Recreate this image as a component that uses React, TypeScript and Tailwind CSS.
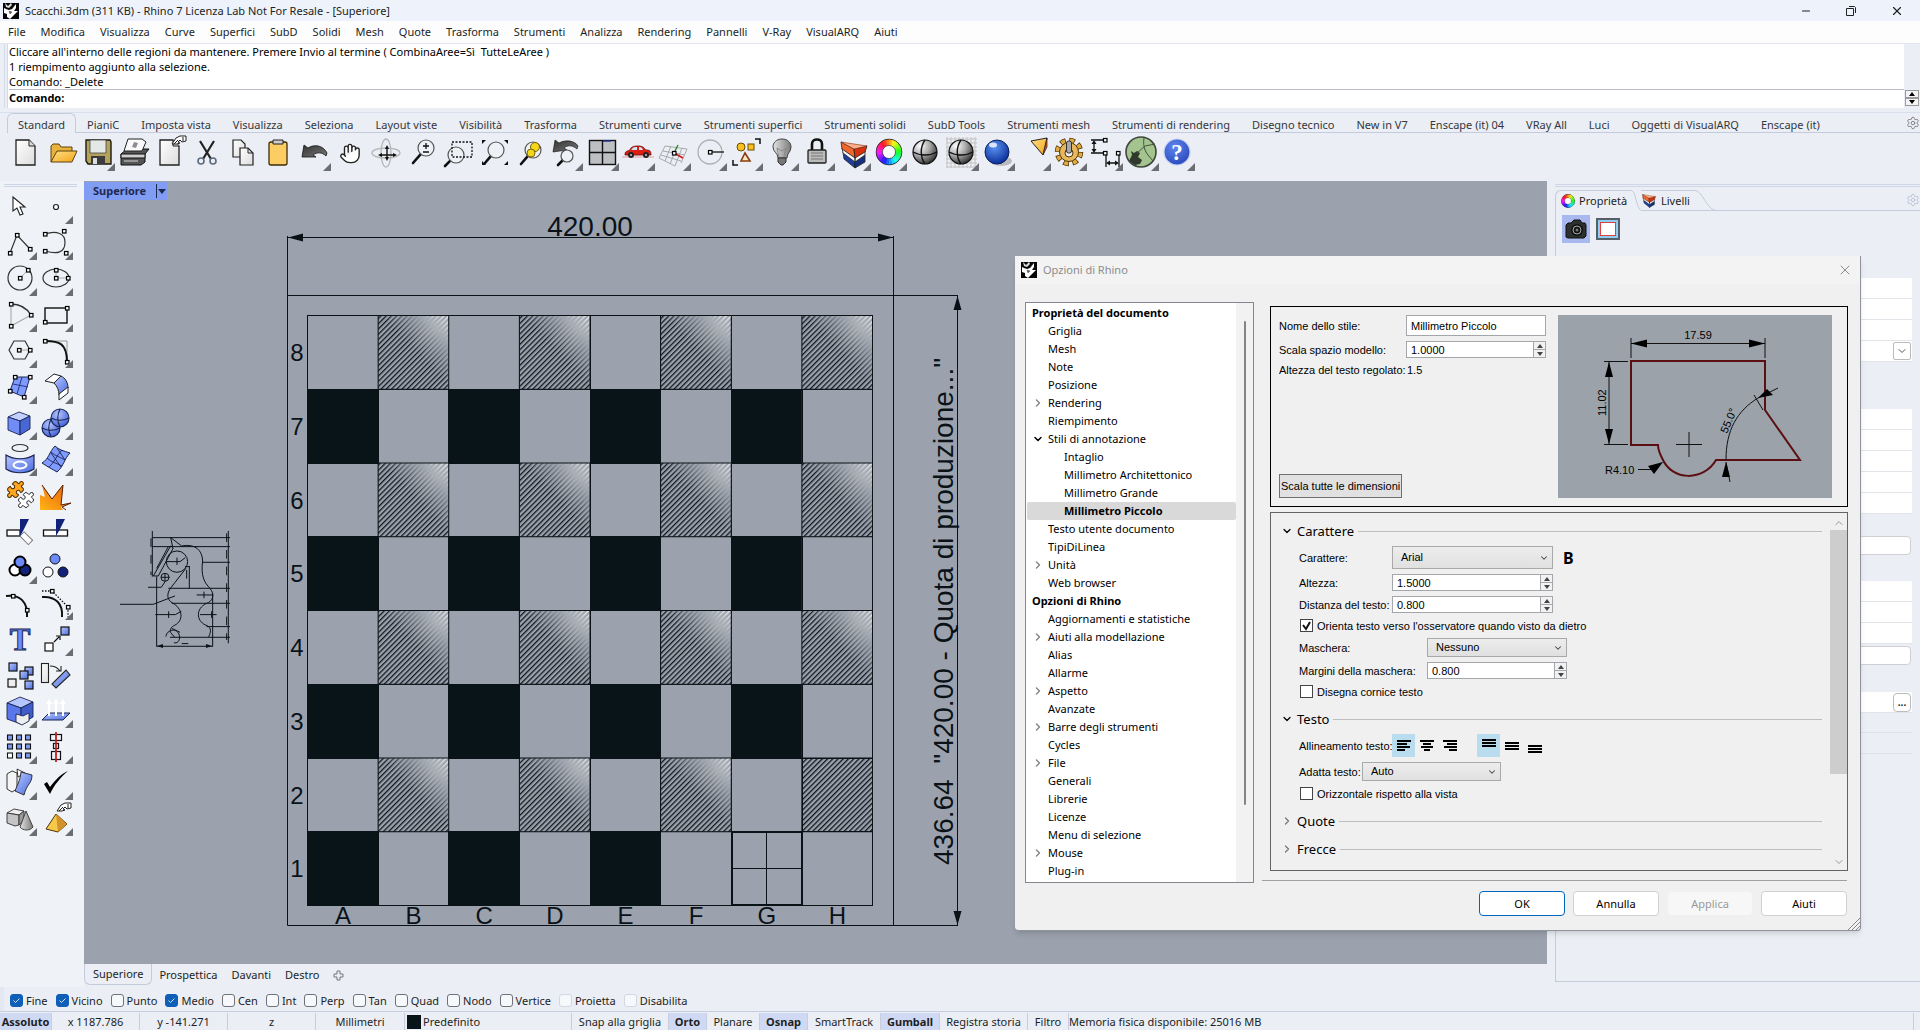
import { useState } from 'react';
import type { ReactNode } from 'react';
import { Minus, X, ChevronDown, ChevronRight, ChevronUp, Puzzle, Settings, Hand } from 'lucide-react';

const menuItems = [
  'File', 'Modifica', 'Visualizza', 'Curve', 'Superfici', 'SubD', 'Solidi', 'Mesh', 'Quote', 'Trasforma',
  'Strumenti', 'Analizza', 'Rendering', 'Pannelli', 'V-Ray', 'VisualARQ', 'Aiuti',
];

const toolbarTabs = [
  'Standard', 'PianiC', 'Imposta vista', 'Visualizza', 'Seleziona', 'Layout viste', 'Visibilità', 'Trasforma',
  'Strumenti curve', 'Strumenti superfici', 'Strumenti solidi', 'SubD Tools', 'Strumenti mesh',
  'Strumenti di rendering', 'Disegno tecnico', 'New in V7', 'Enscape (it) 04', 'VRay All', 'Luci',
  'Oggetti di VisualARQ', 'Enscape (it)',
];

interface Tool {
  name: string;
  flyout?: boolean;
  art: ReactNode;
}

interface TreeItem {
  label: string;
  level: number;
  state?: 'open' | 'closed';
}

const treeItems: TreeItem[] = [
  { label: 'Proprietà del documento', level: 0 },
  { label: 'Griglia', level: 1 },
  { label: 'Mesh', level: 1 },
  { label: 'Note', level: 1 },
  { label: 'Posizione', level: 1 },
  { label: 'Rendering', level: 1, state: 'closed' },
  { label: 'Riempimento', level: 1 },
  { label: 'Stili di annotazione', level: 1, state: 'open' },
  { label: 'Intaglio', level: 2 },
  { label: 'Millimetro Architettonico', level: 2 },
  { label: 'Millimetro Grande', level: 2 },
  { label: 'Millimetro Piccolo', level: 2 },
  { label: 'Testo utente documento', level: 1 },
  { label: 'TipiDiLinea', level: 1 },
  { label: 'Unità', level: 1, state: 'closed' },
  { label: 'Web browser', level: 1 },
  { label: 'Opzioni di Rhino', level: 0 },
  { label: 'Aggiornamenti e statistiche', level: 1 },
  { label: 'Aiuti alla modellazione', level: 1, state: 'closed' },
  { label: 'Alias', level: 1 },
  { label: 'Allarme', level: 1 },
  { label: 'Aspetto', level: 1, state: 'closed' },
  { label: 'Avanzate', level: 1 },
  { label: 'Barre degli strumenti', level: 1, state: 'closed' },
  { label: 'Cycles', level: 1 },
  { label: 'File', level: 1, state: 'closed' },
  { label: 'Generali', level: 1 },
  { label: 'Librerie', level: 1 },
  { label: 'Licenze', level: 1 },
  { label: 'Menu di selezione', level: 1 },
  { label: 'Mouse', level: 1, state: 'closed' },
  { label: 'Plug-in', level: 1 },
];

const osnaps = [
  { label: 'Fine', on: true },
  { label: 'Vicino', on: true },
  { label: 'Punto' },
  { label: 'Medio', on: true },
  { label: 'Cen' },
  { label: 'Int' },
  { label: 'Perp' },
  { label: 'Tan' },
  { label: 'Quad' },
  { label: 'Nodo' },
  { label: 'Vertice' },
  { label: 'Proietta', dim: true },
  { label: 'Disabilita', dim: true },
];

/* ---------- small drawing helpers ---------- */

// Small square grip used on curve icons
const Grip = ({ x, y }: { x: number; y: number }) => (
  <rect x={x - 1.5} y={y - 1.5} width="3.5" height="3.5" fill="#fff" stroke="#000" strokeWidth="1.2" />
);

const ColorWheel = ({ cx, cy, r, w }: { cx: number; cy: number; r: number; w: number }) => {
  const len = (2 * Math.PI * r) / 24;
  return (
    <g fill="none">
      <circle cx={cx} cy={cy} r={r} stroke="#222" strokeWidth={w + 1.5} />
      {Array.from({ length: 24 }, (_, i) => (
        <circle
          key={i}
          cx={cx}
          cy={cy}
          r={r}
          stroke={`hsl(${(i * 15 + 40) % 360} 100% 55%)`}
          strokeWidth={w}
          strokeDasharray={`${len + 0.4} 999`}
          transform={`rotate(${i * 15 - 90} ${cx} ${cy})`}
        />
      ))}
      <circle cx={cx} cy={cy} r={r - w / 2} fill="#fff" stroke="#333" strokeWidth="0.6" />
    </g>
  );
};

const Lens = ({ x, y, hx, hy }: { x: number; y: number; hx: number; hy: number }) => {
  const d = Math.hypot(hx - x, hy - y);
  return (
    <>
      <line x1={x + ((hx - x) / d) * 8} y1={y + ((hy - y) / d) * 8} x2={hx} y2={hy} stroke="#111" strokeWidth="2.6" strokeLinecap="round" />
      <circle cx={x} cy={y} r="8" fill="#eef1f5" fillOpacity="0.9" stroke="#555" strokeWidth="1.2" />
    </>
  );
};

const Layers = () => (
  <>
    <path d="M8 17l12 8v8L9 24z" fill="#1d3f9c" stroke="#222" strokeWidth="0.8" />
    <path d="M20 25l10-5v7l-10 6z" fill="#16307c" stroke="#222" strokeWidth="0.8" />
    <path d="M7 13l13 9v5L8 18zM20 22l10-6v4l-10 7z" fill="#f7f7f7" stroke="#222" strokeWidth="0.8" />
    <path d="M6 7l1 7 13 9-1-9z" fill="#f2652c" stroke="#222" strokeWidth="0.8" />
    <path d="M19 14l13-3-2 6-10 6z" fill="#d6300c" stroke="#222" strokeWidth="0.8" />
    <path d="M6 7l26 4-13 3z" fill="#ffb08a" stroke="#7a2a10" strokeWidth="0.6" />
  </>
);

const RhinoLogo = () => (
  <svg className="h-4 w-4 shrink-0" viewBox="0 0 16 16">
    <rect width="16" height="16" fill="#050505" />
    <path d="M1 5l2 1 3 1 3-1 4-5 0 4-2 3 4 0-4 4-4 4-3-2 0-3-3-1z" fill="#fff" />
    <path d="M2 0l3 3 3-3 1 2-3 3-3-1z" fill="#ddd" />
    <path d="M6 8l3 1-2 2zM11 3l-2 3" fill="#555" stroke="#555" strokeWidth="0.5" />
  </svg>
);

const GhostHand = ({ x, y }: { x: number; y: number }) => (
  <path
    transform={`translate(${x} ${y})`}
    d="M0 8l4-6 4-2h6v5l-4 1-2-2-2 2 2 1-3 1zM11 1v4M2 8l4-4"
    fill="#fff"
    stroke="#222"
    strokeWidth="1"
  />
);

/* ---------- main toolbar ---------- */

const mainTools: Tool[] = [
  { name: 'Nuovo', art: <><path d="M9 5h13l6 6v19H9z" fill="url(#paper)" stroke="#222" strokeWidth="1.3" /><path d="M22 5v6h6" fill="#ddd" stroke="#222" /></> },
  { name: 'Apri', art: <><path d="M8 27V11l2-2h6l2 3h11v4" fill="#e9b23c" stroke="#5c430c" /><path d="M8 27l6-11h20l-5 11z" fill="url(#gold)" stroke="#5c430c" /></> },
  { name: 'Salva', flyout: true, art: <><path d="M7 5h24l1 2v22H9l-2-3z" fill="#b3a35c" stroke="#1c1a10" strokeWidth="1.4" /><path d="M11 5h16v13H11z" fill="#e4e8e6" stroke="#444" strokeWidth="0.8" /><path d="M12 21h14v8H12z" fill="#3c3c3c" /><path d="M14 23h4v6h-4z" fill="#ddd" /></> },
  { name: 'Stampa', art: <><path d="M6 19l6-5h22l-4 5v8l-4 3H6z" fill="#555" stroke="#111" /><path d="M6 19h24v4H6z" fill="#cfcfcf" stroke="#111" /><path d="M13 4h14l4 3-4 9H9z" fill="#fafafa" stroke="#222" /><path d="M19 7l4 1-2 5-4-1z" fill="#8a8f96" /><path d="M9 26h14" stroke="#aaa" strokeWidth="1.5" /></> },
  { name: 'Proprietà documento', art: <><path d="M9 5h13l6 6v19H9z" fill="url(#paper)" stroke="#222" strokeWidth="1.3" /><path d="M22 5v6h6" fill="#ddd" stroke="#222" /><GhostHand x={21} y={1} /></> },
  { name: 'Taglia', art: <g fill="none"><path d="M13 6l11 18M27 6L16 24" stroke="#222" strokeWidth="2.2" /><circle cx="14" cy="26" r="3" stroke="#5c6a80" strokeWidth="1.6" /><circle cx="26" cy="26" r="3" stroke="#5c6a80" strokeWidth="1.6" /></g> },
  { name: 'Copia', art: <><path d="M10 5h8l4 4v13H10z" fill="url(#paper)" stroke="#222" strokeWidth="1.2" /><path d="M17 13h8l5 5v12H17z" fill="url(#paper)" stroke="#222" strokeWidth="1.2" /><path d="M25 13v5h5" fill="none" stroke="#222" /></> },
  { name: 'Incolla', art: <><rect x="10" y="7" width="18" height="23" rx="2" fill="#fbcd62" stroke="#3d2c08" strokeWidth="1.3" /><path d="M14 5h10v4H14z" fill="#ccc" stroke="#222" /></> },
  { name: 'Annulla', flyout: true, art: <path d="M7 22l2-12 4 3c6-4 15-3 19 5l-1 3c-4-4-9-4-13-1l3 2z" fill="url(#dark)" stroke="#111" strokeWidth="0.8" /> },
  { name: 'Pan', art: <Hand x={8} y={6} width={22} height={25} stroke="#222" strokeWidth={1.5} fill="#fff" /> },
  { name: 'Ruota vista', art: <g fill="none"><ellipse cx="19" cy="18" rx="14" ry="5" stroke="#b5b5b5" strokeWidth="1.3" /><ellipse cx="19" cy="18" rx="5" ry="14" stroke="#b5b5b5" strokeWidth="1.3" /><path d="M20 14v9M14 20h13" stroke="#111" strokeWidth="1.4" /><path d="M18 14l2-4 2 4zM18 22l2 4 2-4zM15 18l-4 2 4 2zM26 18l4 2-4 2z" fill="#111" /></g> },
  { name: 'Zoom dinamico', art: <><Lens x={23} y={13} hx={10} hy={28} /><path d="M20 11h6M23 8v6M20 17h6" stroke="#111" strokeWidth="1.3" /></> },
  { name: 'Zoom finestra', art: <><Lens x={17} y={20} hx={6} hy={31} /><path d="M13 7h20v15H13z" fill="none" stroke="#111" strokeWidth="1.3" strokeDasharray="2 1.5" /></> },
  { name: 'Zoom estensioni', art: <><Lens x={21} y={15} hx={10} hy={28} /><path d="M7 5h4l-4 4zM33 5h-4l4 4zM7 30h4l-4-4zM33 30h-4l4-4z" fill="#111" /></> },
  { name: 'Zoom selezionati', art: <><Lens x={22} y={15} hx={10} hy={29} /><circle cx="24" cy="12" r="4.5" fill="#f5d51c" stroke="#776300" /><circle cx="20" cy="18" r="4" fill="#f5d51c" stroke="#776300" /></> },
  { name: 'Vista precedente', flyout: true, art: <><path d="M6 17l2-12 4 3c7-4 16-2 19 3l-1 3c-5-4-9-4-13-1l3 2z" fill="url(#dark)" stroke="#111" strokeWidth="0.6" /><line x1="16" y1="25" x2="11" y2="30" stroke="#111" strokeWidth="2.6" strokeLinecap="round" /><circle cx="20" cy="21" r="6" fill="#eef1f5" stroke="#555" strokeWidth="1.2" /></> },
  { name: 'Quattro viste', flyout: true, art: <><rect x="6.5" y="5.5" width="26" height="24" fill="#bdbfc3" stroke="#111" strokeWidth="1.4" /><path d="M19.5 5v25M6 17.5h27" stroke="#111" strokeWidth="1.4" /><path d="M20 6h8" stroke="#22339a" strokeWidth="1.4" /></> },
  { name: 'Vista destra', flyout: true, art: <><path d="M3 22h32" stroke="#e2a0a0" /><path d="M6 19c0-3 3-3 5-4 1-3 3-4 8-4 5 0 6 2 8 4 4 0 5 1 5 5H6z" fill="#dc1f14" stroke="#6d0b05" strokeWidth="0.8" /><path d="M13 14c1-2 3-2 5-2v3h-6zM20 12c3 0 3 1 4 3h-4z" fill="#cfe3f2" /><circle cx="12" cy="20" r="3" fill="#222" /><circle cx="27" cy="20" r="3" fill="#222" /><circle cx="12" cy="20" r="1" fill="#ccc" /><circle cx="27" cy="20" r="1" fill="#ccc" /></> },
  { name: 'Piano C', flyout: true, art: <g fill="none"><path d="M10 11l22 3M8 16l22 4M6 20l20 6M4 23l16 8M10 11L4 23M16 11l-6 15M22 12l-7 17M27 13l-7 18M32 14l-6 14" stroke="#a9a9a9" /><path d="M19 18l9 5" stroke="#d01818" strokeWidth="1.6" /><path d="M19 18l4-8" stroke="#2c8a2c" strokeWidth="1.4" /><Grip x={19} y={18} /></g> },
  { name: 'Orto', flyout: true, art: <><circle cx="19" cy="17" r="12" fill="none" stroke="#b0b0b0" strokeWidth="1.3" /><path d="M19 17h14" stroke="#111" strokeWidth="1.3" /><Grip x={19} y={17} /></> },
  { name: 'Seleziona', flyout: true, art: <g fill="#fbc11c" stroke="#6b4c05"><circle cx="14" cy="12" r="4" /><rect x="21" y="9" width="6" height="6" /><path d="M18 18l5 8h-9z" fill="#f5e6c8" stroke="#8a3c0c" strokeWidth="1.6" /><path d="M28 4h5v5M6 25v5h5" fill="none" stroke="#111" strokeWidth="1.5" /></g> },
  { name: 'Nascondi', flyout: true, art: <><path d="M19 4c6 0 9 4 9 8 0 5-4 6-4 11h-9c0-5-5-6-5-11 0-4 3-8 9-8z" fill="url(#steel)" stroke="#444" /><path d="M15 23h8v4l-3 3h-2l-3-3z" fill="#777" stroke="#333" /><path d="M16 22l-2-9 5 3 4-3-2 9" fill="none" stroke="#888" /></> },
  { name: 'Blocca', flyout: true, art: <><path d="M13 15V9c0-6 10-6 10 0v6" fill="none" stroke="#111" strokeWidth="2.6" /><rect x="9" y="15" width="18" height="13" rx="1" fill="#bbb" stroke="#222" strokeWidth="1.3" /><path d="M12 18h12M12 21h12M12 24h12" stroke="#777" /></> },
  { name: 'Livelli', flyout: true, art: <Layers /> },
  { name: 'Proprietà', flyout: true, art: <ColorWheel cx={18} cy={17} r={9.5} w={6} /> },
  { name: 'Ombreggiata', art: <><circle cx="18" cy="17" r="12" fill="url(#ball)" stroke="#111" strokeWidth="1.2" /><path d="M18 5c-5 7-5 17 0 24M6 17c7 4 17 4 24 0" fill="none" stroke="#111" strokeWidth="1.4" /></> },
  { name: 'Modalità', flyout: true, art: <><path d="M4 2v31M8 2v31M12 2v31M16 2v31M20 2v31M24 2v31M28 2v31M32 2v31M3 4h31M3 8h31M3 12h31M3 16h31M3 20h31M3 24h31M3 28h31M3 32h31" stroke="#c2c2c2" /><circle cx="18" cy="17" r="12" fill="url(#ball)" stroke="#111" strokeWidth="1.2" /><path d="M18 5c-5 7-5 17 0 24M6 17c7 4 17 4 24 0" fill="none" stroke="#111" strokeWidth="1.4" /></> },
  { name: 'Render', flyout: true, art: <><ellipse cx="22" cy="26" rx="11" ry="5" fill="#999" opacity="0.6" /><circle cx="18" cy="17" r="12" fill="url(#blueball)" stroke="#08205e" /><ellipse cx="14" cy="10" rx="4" ry="2.5" fill="#fff" opacity="0.8" /></> },
  { name: 'Luce', flyout: true, art: <><path d="M16 6l16-3-4 17z" fill="url(#gold)" stroke="#222" /><path d="M32 3l-4 17 4-8z" fill="#d05a12" stroke="#222" strokeWidth="0.7" /></> },
  { name: 'Opzioni', flyout: true, art: <><circle cx="18" cy="17" r="11" fill="none" stroke="#4d3405" strokeWidth="6.5" strokeDasharray="5.2 3.438" /><circle cx="18" cy="17" r="11" fill="none" stroke="#e2aa45" strokeWidth="5" strokeDasharray="3.8 4.838" strokeDashoffset="-0.7" /><circle cx="18" cy="17" r="9.5" fill="#e8b75b" stroke="#4d3405" /><circle cx="18" cy="18" r="4" fill="#eee" stroke="#4d3405" /><rect x="15.5" y="6" width="5" height="12" rx="2" fill="#a8a8a8" stroke="#333" /></> },
  { name: 'Quote', flyout: true, art: <g stroke="#111" strokeWidth="1.3"><path d="M4 5h15M4 18h15M7 8v7M19 18v14M32 18v14M21 28h9" fill="none" /><path d="M4.5 9L7 5l2.5 4zM4.5 14L7 18l2.5-4zM23 25.5L19 28l4 2.5zM28 25.5l4 2.5-4 2.5z" fill="#111" strokeWidth="0" /><Grip x={18} y={5} /><Grip x={18} y={18} /><Grip x={31} y={18} /></g> },
  { name: 'Grasshopper', flyout: true, art: <><circle cx="18" cy="17" r="15" fill="#a3c48e" stroke="#3f463d" strokeWidth="1.6" /><path d="M6 26l3-6-1-4 3 2 3-2 3 2-2 4 4 3-2 4-5 1z" fill="#2f3a2c" /><path d="M14 18l8-7M21 3c-1 6 0 12 4 17l5 6M22 11L32 9" stroke="#44553d" fill="none" /></> },
  { name: 'Aiuti', flyout: true, art: <><circle cx="18" cy="17" r="13" fill="url(#helpball)" stroke="#c7d2f5" strokeWidth="1.2" /><text x="18" y="25" textAnchor="middle" fontSize="23" fontWeight="700" fontFamily="Liberation Serif, serif" fill="#fff">?</text></> },
];

/* ---------- side toolbar (two columns) ---------- */

const sideTools: Tool[] = [
  { name: 'Selezione', art: <path d="M12 9v14l4-3 3 7 3-1-3-7h5z" fill="#fff" stroke="#222" strokeWidth="1.1" /> },
  { name: 'Punto', flyout: true, art: <circle cx="19" cy="19" r="2.5" fill="#fff" stroke="#222" strokeWidth="1.2" /> },
  { name: 'Polilinea', flyout: true, art: <><path d="M9 29l7-18 13 14" fill="none" stroke="#333" strokeWidth="1.2" /><Grip x={9} y={29} /><Grip x={16} y={11} /><Grip x={29} y={25} /></> },
  { name: 'Curva', flyout: true, art: <><path d="M8 10c12-4 20 0 20 8 0 12-9 12-20 9" fill="none" stroke="#333" strokeWidth="1.2" /><Grip x={8} y={10} /><Grip x={27} y={7} /><Grip x={8} y={27} /><Grip x={29} y={29} /></> },
  { name: 'Cerchio', flyout: true, art: <><circle cx="19" cy="18" r="12" fill="none" stroke="#333" strokeWidth="1.2" /><path d="M19 18l8-8" stroke="#aaa" /><Grip x={19} y={18} /><Grip x={27} y={10} /></> },
  { name: 'Ellisse', flyout: true, art: <><ellipse cx="19" cy="18" rx="13" ry="9" fill="none" stroke="#333" strokeWidth="1.2" /><path d="M19 10v8h12" fill="none" stroke="#aaa" /><Grip x={19} y={18} /><Grip x={19} y={10} /><Grip x={31} y={18} /></> },
  { name: 'Arco', flyout: true, art: <><path d="M10 8v22l20-11" fill="none" stroke="#aaa" strokeWidth="1.1" /><path d="M10 8c8 0 15 3 20 11" fill="none" stroke="#333" strokeWidth="1.3" /><Grip x={10} y={8} /><Grip x={30} y={19} /><Grip x={10} y={30} /></> },
  { name: 'Rettangolo', flyout: true, art: <><rect x="8" y="12" width="22" height="15" fill="none" stroke="#111" strokeWidth="1.4" /><Grip x={30} y={12} /><Grip x={8} y={26} /></> },
  { name: 'Poligono', flyout: true, art: <><path d="M8 18l5-9h11l5 9-5 9H13z" fill="none" stroke="#333" strokeWidth="1.2" /><path d="M18 18h11" stroke="#aaa" /><Grip x={18} y={18} /><Grip x={29} y={18} /></> },
  { name: 'Raccorda', flyout: true, art: <><path d="M8 9h22v21" fill="none" stroke="#999" /><path d="M8 9c14 0 22 2 22 21" fill="none" stroke="#111" strokeWidth="2" /><Grip x={8} y={9} /><Grip x={30} y={30} /></> },
  { name: 'Superficie', flyout: true, art: <><path d="M14 9h15l-6 20-14-6z" fill="#7f9bff" stroke="#1d2a5c" /><path d="M21 9l-5 17M12 16l15 3" stroke="#24388a" /><Grip x={14} y={9} /><Grip x={29} y={9} /><Grip x={23} y={29} /><Grip x={9} y={23} /></> },
  { name: 'Sweep', flyout: true, art: <><path d="M8 13l9-7 7 2-7 7z" fill="#fff" stroke="#222" /><path d="M17 15l7-7c4 2 7 6 7 12l-9 7c0-5-2-9-5-12z" fill="url(#blue)" stroke="#222" /><path d="M22 26l9-7v6l-9 7z" fill="#fff" stroke="#222" /></> },
  { name: 'Cubo', flyout: true, art: <g stroke="#1b2450" strokeWidth="0.9"><path d="M7 13l11-5 11 4-10 5z" fill="#c2d0ff" /><path d="M7 13l12 4v14L7 26z" fill="#6f8df5" /><path d="M19 17l10-5v13l-10 6z" fill="#4866d4" /></g> },
  { name: 'Sfere', flyout: true, art: <g stroke="#1b2450" strokeWidth="1.1"><circle cx="14" cy="24" r="9" fill="url(#blueball2)" /><path d="M14 15c-3 6-3 12 0 18M5 24c6 3 12 3 18 0" fill="none" /><circle cx="23" cy="14" r="9" fill="url(#blueball2)" /><path d="M23 5c-3 6-3 12 0 18M14 14c6 3 12 3 18 0" fill="none" /></g> },
  { name: 'Proietta', flyout: true, art: <><ellipse cx="19" cy="8" rx="8" ry="3.5" fill="none" stroke="#333" strokeWidth="1.2" /><path d="M5 15c8 5 20 5 28 0v14c-8 5-20 5-28 0z" fill="url(#blue)" stroke="#1b2450" strokeWidth="1.2" /><ellipse cx="19" cy="25" rx="6.5" ry="3.5" fill="none" stroke="#fff" strokeWidth="2" /></> },
  { name: 'Mesh', flyout: true, art: <><path d="M18 6c4 4 9 5 15 7-6 6-6 13-13 19-5-3-9-5-15-9 7-4 7-11 13-17z" fill="#7f9bff" stroke="#1b2450" /><path d="M25 10c-6 6-7 12-13 17M14 12c4 4 9 5 14 8M10 18c4 4 9 5 15 8M20 8l8 12M14 13l10 14" stroke="#1b2450" fill="none" strokeWidth="0.9" /></> },
  { name: 'Unisci', art: <><Puzzle x={16} y={15} width={18} height={18} fill="#fff" stroke="#222" strokeWidth={1.3} /><Puzzle x={5} y={4} width={19} height={19} fill="#ffa51e" stroke="#4d2c00" strokeWidth={1.3} /></> },
  { name: 'Esplodi', art: <><path d="M3 34V19l5 2-3-12 10 14 11-14-2 20 10-2-10 4 2 3z" fill="url(#fire)" /><path d="M5 9l10 14 11-14-2 20 10-2-9 4 4 3" fill="none" stroke="#5c2000" strokeWidth="1" /></> },
  { name: 'Tronca', art: <><rect x="6" y="18" width="13" height="6" fill="#fff" stroke="#111" strokeWidth="1.3" /><rect x="21" y="19" width="12" height="6" transform="rotate(45 21 22)" fill="#fff" stroke="#777" /><path d="M19 7h9l-6 12-3 5z" fill="#12217a" /></> },
  { name: 'Suddividi', art: <><rect x="6.5" y="18" width="24" height="6" fill="#fff" stroke="#111" strokeWidth="1.3" /><path d="M19 7h9l-6 12-3 5z" fill="#12217a" /></> },
  { name: 'Raggruppa', flyout: true, art: <g stroke="#000" strokeWidth="2"><circle cx="14" cy="22" r="5.5" fill="#fff" /><circle cx="24" cy="22" r="5.5" fill="#12217a" /><circle cx="19" cy="14" r="5.5" fill="#6b8af8" /></g> },
  { name: 'Separa', art: <g stroke="#111"><circle cx="18" cy="11" r="5" fill="#6b8af8" /><circle cx="11" cy="24" r="5" fill="#fff" /><circle cx="26" cy="24" r="5" fill="#12217a" /></g> },
  { name: 'Modifica punti', art: <><path d="M5 12c14-2 22 6 21 21" fill="none" stroke="#111" strokeWidth="2" /><Grip x={12} y={12} /><Grip x={26} y={26} /></> },
  { name: 'Punti di controllo', flyout: true, art: <><path d="M5 7h10l16 16v10" fill="none" stroke="#111" strokeWidth="1.3" strokeDasharray="1.5 1.5" /><path d="M5 13c14-1 21 7 20 20" fill="none" stroke="#111" strokeWidth="2" /><Grip x={15} y={7} /><Grip x={31} y={23} /></> },
  { name: 'Testo', art: <text x="19" y="30" textAnchor="middle" fontSize="31" fontWeight="700" fontFamily="Liberation Serif, serif" fill="#6f8df5" stroke="#1b2450" strokeWidth="1">T</text> },
  { name: 'Sposta', flyout: true, art: <><rect x="8" y="23" width="8" height="8" fill="#fff" stroke="#111" strokeWidth="1.2" /><rect x="24" y="7" width="8" height="8" fill="url(#blue)" stroke="#111" strokeWidth="1.2" /><path d="M17 22l5-5M19 16h4v4" fill="none" stroke="#111" strokeWidth="1.2" /></> },
  { name: 'Copia', art: <g stroke="#111" strokeWidth="1.2" fill="url(#blue)"><rect x="8" y="7" width="8" height="8" /><rect x="24" y="11" width="8" height="8" /><rect x="19" y="15" width="8" height="8" /><rect x="7" y="23" width="8" height="8" fill="#eee" /><rect x="24" y="25" width="8" height="8" /></g> },
  { name: 'Ruota', art: <g stroke="#222" strokeWidth="1.1"><rect x="4.5" y="7.5" width="7" height="19" fill="url(#paper)" /><path d="M29 14l4 5-14 13-4-4z" fill="url(#blue)" /><path d="M13 10c5 0 8 2 10 5M24 10v5h-5" fill="none" /></g> },
  { name: 'Solidi', flyout: true, art: <g stroke="#1b2450" strokeWidth="0.9"><path d="M6 11l13-6 13 5-12 6z" fill="#b5c6ff" /><path d="M6 11l14 5v16L6 27z" fill="#5877ea" /><path d="M20 16l12-6v15l-12 7z" fill="#3f5ccb" /><path d="M15 22l7 2 6-3v8l-7 4-6-3z" fill="#eee" /></g> },
  { name: 'Estrudi', flyout: true, art: <><path d="M12 21h21l-7 7H5z" fill="url(#blue)" stroke="#1b2450" /><path d="M12 24V10M19 24V10M26 24V10" stroke="#fff" strokeWidth="2" /><path d="M9 12l3-5 3 5zM16 12l3-5 3 5zM23 12l3-5 3 5z" fill="#fff" /></> },
  { name: 'Serie', flyout: true, art: <g stroke="#111" strokeWidth="1.1">{[7, 16, 25].map((y) => [6.5, 15.5, 24.5].map((x) => <rect key={`${x}${y}`} x={x} y={y} width="5" height="5" fill={x < 10 && y > 20 ? '#fff' : '#7f9bf0'} />))}</g> },
  { name: 'Allinea', flyout: true, art: <><g fill="none" stroke="#111" strokeWidth="1.2"><rect x="13.5" y="6.5" width="11" height="6" /><rect x="16.5" y="15.5" width="5" height="5" /><rect x="14.5" y="23.5" width="9" height="8" /></g><path d="M19 4v30" stroke="#c41f1f" strokeWidth="1.8" /></> },
  { name: 'Deforma', flyout: true, art: <g stroke="#222" strokeWidth="0.9"><path d="M6 10l5-3 5 2v16l-5 3-5-3z" fill="#f4f4f4" /><path d="M16 5l8 4-7 4z" fill="#fff" /><path d="M20 8l11 3c0 9-5 8-8 20l-9-4c3-8 5-10 6-19z" fill="url(#blue)" /></g> },
  { name: 'Controlla', flyout: true, art: <path d="M7 20l3-2 3 5C18 16 24 10 31 7 24 13 17 21 13 30z" fill="#000" /> },
  { name: 'Elementi', flyout: true, art: <g stroke="#333" strokeWidth="0.9"><path d="M6 13l7-4 10 2-5 4z" fill="#eee" /><path d="M6 13l12 2v10l-4 1-8-3z" fill="#c4c4c4" /><path d="M18 15l5-4v10l-5 4z" fill="#999" /><path d="M25 11l7 16c-3 4-10 4-13 0z" fill="url(#steel)" /></g> },
  { name: 'Piramide', flyout: true, art: <><path d="M19 14l11 10-9 8-12-3z" fill="#f7c94b" stroke="#4d3405" /><path d="M19 14l2 18 9-8z" fill="#d1922a" /><GhostHand x={20} y={3} /></> },
];

function ToolButton({ tool }: { tool: Tool }) {
  return (
    <button type="button" aria-label={tool.name} className="h-9 w-9 shrink-0 hover:bg-blue-100">
      <svg viewBox="0 0 36 36" className="h-9 w-9">
        {tool.art}
        {tool.flyout && <path d="M28 36h8v-8z" fill="#6b6d70" />}
      </svg>
    </button>
  );
}

// Shared gradients, referenced by id from the icons and the drawing
function Gradients() {
  return (
    <svg className="absolute h-0 w-0" aria-hidden="true">
      <defs>
        <linearGradient id="paper" x2="1" y2="1"><stop stopColor="#fff" /><stop offset="1" stopColor="#dcdcdc" /></linearGradient>
        <linearGradient id="gold" x2="1" y2="1"><stop stopColor="#ffe08a" /><stop offset="1" stopColor="#f2a516" /></linearGradient>
        <linearGradient id="dark" y2="1"><stop stopColor="#333" /><stop offset="1" stopColor="#777" /></linearGradient>
        <linearGradient id="steel"><stop stopColor="#e2e2e2" /><stop offset="1" stopColor="#7b7b7b" /></linearGradient>
        <linearGradient id="blue" x2="1" y2="1"><stop stopColor="#b9c9ff" /><stop offset="1" stopColor="#4a6be0" /></linearGradient>
        <linearGradient id="fire" x1="0" y1="1" x2="1" y2="0"><stop stopColor="#ffb515" /><stop offset="1" stopColor="#e8590c" /></linearGradient>
        <radialGradient id="ball" cx="0.3" cy="0.25" r="0.8"><stop stopColor="#fff" /><stop offset="0.5" stopColor="#aaa" /><stop offset="1" stopColor="#333" /></radialGradient>
        <radialGradient id="blueball" cx="0.4" cy="0.3" r="0.7"><stop stopColor="#5b94f0" /><stop offset="1" stopColor="#0b2f9c" /></radialGradient>
        <radialGradient id="blueball2" cx="0.4" cy="0.3" r="0.7"><stop stopColor="#b3c5ff" /><stop offset="1" stopColor="#4262d6" /></radialGradient>
        <radialGradient id="helpball" cx="0.4" cy="0.3" r="0.8"><stop stopColor="#5f86ee" /><stop offset="1" stopColor="#2443b8" /></radialGradient>
      </defs>
    </svg>
  );
}

/* ---------- viewport drawing ---------- */

const BOARD = { x: 307.5, y: 315.5, cell: 70.625, row: 73.75 };

function Board() {
  const cells: ReactNode[] = [];
  for (let r = 0; r < 8; r++) {
    for (let c = 0; c < 8; c++) {
      const x = BOARD.x + c * BOARD.cell;
      const y = BOARD.y + r * BOARD.row;
      const box = { x, y, width: BOARD.cell, height: BOARD.row };
      if (r % 2 === 1 && c % 2 === 0 && !(r === 7 && c === 6)) {
        cells.push(<rect key={`${r}-${c}`} {...box} fill="#081417" />);
      } else if (r % 2 === 0 && c % 2 === 1) {
        const plain = r === 6 && c === 7;
        cells.push(
          <g key={`${r}-${c}`}>
            {!plain && <rect {...box} fill="url(#glow)" />}
            <rect {...box} fill={plain ? '#0c161b' : 'url(#hatchTone)'} mask="url(#hatchMask)" />
            <rect {...box} fill="none" stroke="#0a1216" />
          </g>
        );
      }
    }
  }
  return <>{cells}</>;
}

function Drawing() {
  const line = '#0a1218';
  return (
    <svg viewBox="84 181 1463 782" preserveAspectRatio="xMidYMin meet" className="h-full w-full" fontFamily="Liberation Sans, Arial, sans-serif" fill={line}>
      <defs>
        <pattern id="hatch" width="3.7" height="3.7" patternUnits="userSpaceOnUse" patternTransform="rotate(45)">
          <rect width="1.3" height="3.7" fill="#fff" />
        </pattern>
        <mask id="hatchMask" maskUnits="userSpaceOnUse" x="300" y="300" width="600" height="620">
          <rect x="300" y="300" width="600" height="620" fill="url(#hatch)" />
        </mask>
        <linearGradient id="hatchTone" x1="1" y1="0" x2="0.2" y2="0.8">
          <stop stopColor="#f4f6f8" />
          <stop offset="0.12" stopColor="#d3d8dd" />
          <stop offset="0.26" stopColor="#9ba2ad" />
          <stop offset="0.6" stopColor="#10191e" />
        </linearGradient>
        <radialGradient id="glow" cx="0.78" cy="0.2" r="0.34">
          <stop stopColor="#acb1b5" />
          <stop offset="1" stopColor="#9ba2ad" />
        </radialGradient>
      </defs>

      {/* frame and dimension lines */}
      <g fill="none" stroke={line}>
        <path d="M287.5 236v689.5M893.5 236v689.5M288 237.5h605M287.5 295.5H958M287.5 925.5H958M957.5 296v629" />
        <rect x="307.5" y="315.5" width="565" height="590" />
        <path d="M378.5 315v590M448.5 315v590M519.5 315v590M590.5 315v590M660.5 315v590M731.5 315v590M802.5 315v590" />
        <path d="M308 389.5h565M308 463.5h565M308 536.5h565M308 610.5h565M308 684.5h565M308 758.5h565M308 831.5h565" />
      </g>
      <path d="M288 237.5l15-4v8zM893 237.5l-15-4v8zM957.5 296l-4 14h8zM957.5 925l-4-14h8z" />
      <Board />
      <g fill="none" stroke={line}>
        <rect x="732" y="832" width="70" height="73" strokeWidth="2" />
        <path d="M766.5 832v73M732 868.5h70" />
      </g>

      <text x="590" y="236" fontSize="28" textAnchor="middle">420.00</text>
      <text fontSize="28" transform="translate(953 865) rotate(-90)" xmlSpace="preserve">
        {'436.64\u00a0 "420.00 - Quota di produzione..."'}
      </text>
      {[8, 7, 6, 5, 4, 3, 2, 1].map((n, i) => (
        <text key={n} x="297" y={361 + i * 73.75} fontSize="24" textAnchor="middle">{n}</text>
      ))}
      {['A', 'B', 'C', 'D', 'E', 'F', 'G', 'H'].map((l, i) => (
        <text key={l} x={343 + i * BOARD.cell} y="924" fontSize="24" textAnchor="middle">{l}</text>
      ))}

      {/* knight piece profile */}
      <g transform="translate(0 180) scale(0.3333)" fill="none" stroke={line} strokeWidth="3">
        <path d="M457 1053v137M685 1053v337M457 1073h233M457 1100h233M608 1147h82M505 1225h185M515 1270h175M620 1340h70M510 1372h180M470 1190v210M638 1240v160M470 1399h168" />
        <path d="M360 1273h100l65-25M444 1222h40l12-18M568 1160v65M555 1160h15" />
        <path d="M460 1188l52-90 8 6-45 84zM470 1165l35-65M512 1073l33 25c40-8 62 12 63 45-6 45 5 65 22 82 16 20 8 40-12 46-30 15-30 50-2 64 16 5 20 15 10 36M512 1073l6 28" />
        <path d="M558 1165l-45 58c-14 18-12 36 3 45 34 18 35 55 8 68-12 6-14 12-12 22l12 14" />
        <circle cx="531" cy="1145" r="32" />
        <circle cx="495" cy="1192" r="12" />
        <path d="M500 1145h40l16-12M531 1133v22M483 1192h26M495 1180v24M590 1245h48M612 1235v20M466 1304h60l18-10M506 1294v20M600 1304h50M635 1294v20" />
        <path d="M498 1370c2-22 34-28 40-4 4 18-8 26-16 22M515 1345l25 12M545 1391h20" />
        <path d="M680 1060v320M453 1075v110M560 1170v50" strokeDasharray="26 24" />
      </g>
      <path d="M157 646l6-2v4zM212 646l-6-2v4z" />
    </svg>
  );
}

// Preview of the annotation style shown in the options window
function StylePreview() {
  return (
    <svg viewBox="0 0 274 183" className="h-[183px] w-[274px] shrink-0 bg-[#9ba2aa]" fontFamily="Liberation Sans, Arial, sans-serif" fontSize="11">
      <path d="M73 46h134v49l35 50h-84c-12 21-44 22-54-2-3-6-4-9-4-13H73z" fill="none" stroke="#5c0f12" strokeWidth="2" />
      <g fill="none" stroke="#111" strokeWidth="1">
        <path d="M73 23v20M207 23v20M73 28.5h134M46 46.5h24M46 129.5h24M51 47v82M118 129.5h26M131 117v25M80 154.5h18M220 73l-20 10M196 80l9 15M172 167l-4-20" />
        <path d="M168 145c0-30 11-49 32-62" />
      </g>
      <g fill="#000">
        <path d="M73 28.5l16-4v8zM207 28.5l-16-4v8zM51 47l-4 15h8zM51 129l-4-15h8zM105 147l-15 4 6 8zM200 83l9-9 6 6zM168 147l-4 15h8z" />
        <text x="140" y="24" textAnchor="middle">17.59</text>
        <text transform="translate(48 101) rotate(-90)">11.02</text>
        <text x="47" y="159">R4.10</text>
        <text transform="translate(169 119) rotate(-67)">55.0°</text>
      </g>
    </svg>
  );
}

/* ---------- form controls ---------- */

function SpinBox({ id, value, className }: { id: string; value: string; className: string }) {
  const [text, setText] = useState(value);
  return (
    <div className={`flex h-[17px] border border-[#a3a6ab] bg-white ${className}`}>
      <input id={id} value={text} onChange={(e) => setText(e.target.value)} className="min-w-0 flex-1 px-1 leading-none outline-none" />
      <div className="flex w-3 flex-col border-l border-[#a3a6ab] bg-[#f2f2f2]">
        <button type="button" aria-label="Aumenta" className="flex flex-1 items-center justify-center border-b border-[#a3a6ab]">
          <svg viewBox="0 0 6 4" className="h-1 w-1.5"><path d="M0 4l3-4 3 4z" fill="#444" /></svg>
        </button>
        <button type="button" aria-label="Diminuisci" className="flex flex-1 items-center justify-center">
          <svg viewBox="0 0 6 4" className="h-1 w-1.5"><path d="M0 0l3 4 3-4z" fill="#444" /></svg>
        </button>
      </div>
    </div>
  );
}

function SelectBox({ id, value, className }: { id: string; value: string; className: string }) {
  return (
    <div className={`relative ${className}`}>
      <select id={id} className="h-full w-full appearance-none border border-[#a9a9a9] bg-linear-to-b from-[#ededed] to-[#e0e0e0] pl-2 leading-none">
        <option>{value}</option>
      </select>
      <ChevronDown className="pointer-events-none absolute top-1/2 right-1 h-2.5 w-2.5 -translate-y-1/2 text-[#444]" strokeWidth={2.5} />
    </div>
  );
}

function CheckRow({ label, defaultChecked }: { label: string; defaultChecked?: boolean }) {
  return (
    <label className="flex h-[15px] items-center gap-1 pl-px">
      <span className="relative flex h-[13px] w-[13px]">
        <input type="checkbox" defaultChecked={defaultChecked} className="peer h-[13px] w-[13px] appearance-none border border-[#444] bg-white" />
        <svg viewBox="0 0 13 13" className="pointer-events-none absolute inset-0 hidden peer-checked:block">
          <path d="M3 6l3 4 4-7" fill="none" stroke="#111" strokeWidth="2" />
        </svg>
      </span>
      {label}
    </label>
  );
}

function SectionHead({ title, open }: { title: string; open?: boolean }) {
  return (
    <button type="button" className="flex h-5 w-full items-center font-['Noto_Sans',sans-serif] text-[13px]">
      <span className="flex w-5 justify-center">
        {open ? <ChevronDown className="h-3 w-3" strokeWidth={2.5} /> : <ChevronRight className="h-3 w-3 text-[#777]" strokeWidth={2.5} />}
      </span>
      {title}
      <span className="ml-1 h-px flex-1 bg-[#bdbdbd]" />
    </button>
  );
}

function AlignButton({ name, rows, active }: { name: string; rows: number[][]; active?: boolean }) {
  return (
    <button type="button" aria-label={name} aria-pressed={!!active} className={`flex h-[23px] w-[23px] items-center justify-center ${active ? 'bg-[#b9dcee]' : ''}`}>
      <svg viewBox="0 0 23 23" className="h-[23px] w-[23px]" stroke="#000" strokeWidth="2">
        {rows.map(([x1, x2, y]) => <path key={y} d={`M${x1} ${y}H${x2}`} />)}
      </svg>
    </button>
  );
}

/* ---------- options window ---------- */

function OptionsDialog() {
  const [selected, setSelected] = useState('Millimetro Piccolo');
  const [styleName, setStyleName] = useState('Millimetro Piccolo');

  return (
    <section
      aria-label="Opzioni di Rhino"
      className="absolute top-[256px] right-[59px] flex h-[675px] w-[846px] flex-col rounded-b-sm border-r border-b border-[#8f949c] bg-[#f0f0f0] text-[11px] text-black shadow-md"
    >
      <header className="flex h-7 shrink-0 items-center bg-[#f3f3f3] px-1.5 text-[#8c8c8c]">
        <RhinoLogo />
        <h2 className="ml-1.5 flex-1 text-[11px]">Opzioni di Rhino</h2>
        <button type="button" aria-label="Chiudi" className="mr-px"><X className="h-4 w-4" strokeWidth={1.5} /></button>
      </header>

      <div className="mt-[18px] flex min-h-0 flex-1 pl-2.5">
        {/* page tree */}
        <div className="flex h-[581px] w-[229px] shrink-0 border border-[#828790] bg-white">
          <ul className="min-w-0 flex-1 py-px pl-px">
            {treeItems.map((item) => {
              const active = item.label === selected;
              return (
                <li key={item.label}>
                  <button
                    type="button"
                    onClick={() => setSelected(item.label)}
                    className={`flex h-[18px] w-full items-center text-left whitespace-nowrap ${active ? 'rounded-xs bg-[#d9d9d9]' : ''} ${active || item.level === 0 ? 'font-bold' : ''}`}
                  >
                    {item.level === 0 && <span className="w-[5px]" />}
                    {item.level === 1 && (
                      <span className="flex w-[21px] justify-center">
                        {item.state === 'open' && <ChevronDown className="h-3 w-3" strokeWidth={3} />}
                        {item.state === 'closed' && <ChevronRight className="h-3 w-3 text-[#888]" strokeWidth={3} />}
                      </span>
                    )}
                    {item.level === 2 && <span className="w-[37px]" />}
                    {item.label}
                  </button>
                </li>
              );
            })}
          </ul>
          <div className="flex w-[17px] justify-center bg-[#f2f2f2] pt-[18px]">
            <div className="h-[484px] w-0.5 rounded-full bg-[#858585]" />
          </div>
        </div>

        <div className="ml-4 flex w-[578px] flex-col font-['Liberation_Sans',Arial,sans-serif]">
          {/* style summary */}
          <div className="mt-1 flex h-[201px] shrink-0 border border-black p-2">
            <div className="flex w-[267px] flex-col items-start">
              <div className="flex w-full items-center">
                <label htmlFor="styleName" className="w-[127px]">Nome dello stile:</label>
                <input
                  id="styleName"
                  value={styleName}
                  onChange={(e) => setStyleName(e.target.value)}
                  className="h-[21px] w-[140px] border border-[#a3a6ab] bg-white px-1 outline-none"
                />
              </div>
              <div className="mt-[5px] flex w-full items-center">
                <label htmlFor="modelScale" className="w-[127px]">Scala spazio modello:</label>
                <SpinBox id="modelScale" value="1.0000" className="w-[140px]" />
              </div>
              <div className="mt-1 flex w-full">
                <span className="w-[127px]">Altezza del testo regolato:</span>
                <span className="pl-px">1.5</span>
              </div>
              <button type="button" className="mt-auto h-6 border border-[#707070] bg-[#e1e1e1] px-px whitespace-nowrap">
                Scala tutte le dimensioni
              </button>
            </div>
            <div className="ml-3">
              <StylePreview />
            </div>
          </div>

          {/* style settings */}
          <div className="mt-[5px] flex h-[359px] shrink-0 border border-[#646464]">
            <div className="flex-1 pt-2 pr-2 pl-[6px]">
              <SectionHead title="Carattere" open />
              <div className="mt-[5px] flex flex-col gap-[5px] pl-[22px]">
                <div className="flex items-center">
                  <label htmlFor="font" className="w-[93px]">Carattere:</label>
                  <SelectBox id="font" value="Arial" className="h-[23px] w-[161px]" />
                  <button type="button" aria-label="Grassetto" className="ml-2.5 font-['Noto_Sans',sans-serif] text-base leading-none font-bold">B</button>
                </div>
                <div className="flex items-center">
                  <label htmlFor="height" className="w-[93px]">Altezza:</label>
                  <SpinBox id="height" value="1.5000" className="w-[161px]" />
                </div>
                <div className="flex items-center">
                  <label htmlFor="gap" className="w-[93px] whitespace-nowrap">Distanza del testo:</label>
                  <SpinBox id="gap" value="0.800" className="w-[161px]" />
                </div>
                <CheckRow label="Orienta testo verso l'osservatore quando visto da dietro" defaultChecked />
                <div className="flex items-center">
                  <label htmlFor="mask" className="w-32">Maschera:</label>
                  <SelectBox id="mask" value="Nessuno" className="h-[19px] w-[140px]" />
                </div>
                <div className="flex items-center">
                  <label htmlFor="maskMargin" className="w-32">Margini della maschera:</label>
                  <SpinBox id="maskMargin" value="0.800" className="w-[140px]" />
                </div>
                <CheckRow label="Disegna cornice testo" />
              </div>

              <div className="mt-2.5">
                <SectionHead title="Testo" open />
              </div>
              <div className="mt-[5px] flex flex-col gap-[5px] pl-[22px]">
                <div className="flex items-center">
                  <span className="w-[93px] whitespace-nowrap">Allineamento testo:</span>
                  <AlignButton name="Sinistra" active rows={[[5, 19, 7], [5, 15, 10], [5, 18, 13], [5, 13, 16]]} />
                  <AlignButton name="Centro" rows={[[5, 19, 7], [8, 16, 10], [6, 18, 13], [9, 15, 16]]} />
                  <AlignButton name="Destra" rows={[[5, 19, 7], [9, 19, 10], [6, 19, 13], [11, 19, 16]]} />
                  <div className="w-4" />
                  <AlignButton name="Alto" active rows={[[5, 19, 6], [5, 19, 9], [5, 19, 12]]} />
                  <AlignButton name="Mezzo" rows={[[5, 19, 9], [5, 19, 12], [5, 19, 15]]} />
                  <AlignButton name="Basso" rows={[[5, 19, 12], [5, 19, 15], [5, 19, 18]]} />
                </div>
                <div className="flex items-center">
                  <label htmlFor="fit" className="w-[63px] whitespace-nowrap">Adatta testo:</label>
                  <SelectBox id="fit" value="Auto" className="h-[19px] w-[139px]" />
                </div>
                <CheckRow label="Orizzontale rispetto alla vista" />
              </div>

              <div className="mt-2.5 flex flex-col gap-2">
                <SectionHead title="Quote" />
                <SectionHead title="Frecce" />
              </div>
            </div>
            <div className="flex w-[17px] flex-col items-center py-0.5 text-[#999]">
              <ChevronUp className="mt-0.5 h-3 w-3" />
              <div className="my-px h-[244px] w-full bg-[#cdcdcd]" />
              <ChevronDown className="mt-auto h-3 w-3" />
            </div>
          </div>
        </div>
      </div>

      <footer className="flex h-[50px] shrink-0 items-start justify-end pr-[13px]">
        <div className="flex w-[585px] justify-end gap-2 border-t border-[#a0a0a0] pt-2.5">
          <button type="button" className="h-[25px] w-[86px] rounded border border-[#0067c0] bg-white">OK</button>
          <button type="button" className="h-[25px] w-[86px] rounded border border-[#d0d0d0] bg-white">Annulla</button>
          <button type="button" disabled className="h-[25px] w-[86px] rounded border border-[#f0f0f0] bg-[#f7f7f7] text-[#9a9a9a]">Applica</button>
          <button type="button" className="h-[25px] w-[86px] rounded border border-[#d0d0d0] bg-white">Aiuti</button>
        </div>
      </footer>
      <svg viewBox="0 0 12 12" className="absolute right-0 bottom-0 h-3 w-3"><path d="M0 12L12 0M4 12l8-8M8 12l4-4" stroke="#888" /></svg>
    </section>
  );
}

/* ---------- properties panel ---------- */

function PropertyRows({ count, picker }: { count: number; picker?: ReactNode }) {
  return (
    <div className="bg-white">
      {Array.from({ length: count }, (_, i) => (
        <div key={i} className="flex h-[21px] items-center justify-end border-b border-[#e2e4ea]">
          {i === count - 1 && picker}
        </div>
      ))}
    </div>
  );
}

function PropertiesPanel() {
  return (
    <aside className="ml-2 flex w-[365px] shrink-0 flex-col pt-[3px] pb-[5px]">
      <div className="h-[3px] border-y border-[#cdd5e6]" />
      <div className="mt-[3px] flex h-[21px] items-end">
        <button type="button" className="flex h-[21px] w-[76px] items-center gap-1 rounded-tl-md border-t border-l border-[#c3cbdd] pl-[5px]">
          <svg viewBox="3 2 30 30" className="h-3.5 w-3.5"><ColorWheel cx={18} cy={17} r={10.5} w={7} /></svg>
          Proprietà
        </button>
        <div className="flex flex-1 items-end">
          <svg viewBox="0 0 10 21" className="h-[21px] w-2.5"><path d="M0 0.5q3 0 5 9t5 11" fill="none" stroke="#c3cbdd" /></svg>
          <button type="button" className="flex h-[21px] w-[54px] items-center gap-1 border-t border-b border-[#c3cbdd]">
            <svg viewBox="5 4 28 32" className="h-4 w-4"><Layers /></svg>
            Livelli
          </button>
          <svg viewBox="0 0 21 21" className="h-[21px] w-[21px]"><path d="M0 0.5q4 0 10 10t11 10H0" fill="none" stroke="#c3cbdd" /></svg>
          <div className="flex h-[21px] flex-1 items-center justify-end border-b border-[#c3cbdd]">
            <Settings className="h-3.5 w-3.5 text-[#b6bfd2]" strokeWidth={1.5} />
          </div>
        </div>
      </div>
      <div className="min-h-0 flex-1 overflow-hidden border-b border-l border-[#c3cbdd] pr-2 pl-1.5">
        <div className="mt-1 flex h-7 items-center gap-1.5">
          <button type="button" aria-label="Vista" className="flex h-7 w-7 items-center justify-center bg-[#a9b8ee]">
            <svg viewBox="0 0 22 20" className="h-5 w-[22px]">
              <path d="M1 6l2-2h3l3-3h6l2 3h3l1 2v11l-2 2H3l-2-1z" fill="#2c3130" stroke="#111" />
              <circle cx="12" cy="11" r="6" fill="#111" />
              <circle cx="12" cy="11" r="4" fill="none" stroke="#aaa" />
              <circle cx="12" cy="11" r="1.5" fill="#777" />
            </svg>
          </button>
          <button type="button" aria-label="Rettangolo" className="flex h-[22px] w-6 border-2 border-[#555f68] bg-[#8fcdf0] p-0.5">
            <span className="flex-1 border border-[#e04040] bg-white" />
          </button>
        </div>
        <div className="mt-[35px]">
          <PropertyRows
            count={4}
            picker={
              <button type="button" aria-label="Apri elenco" className="mr-px flex h-[18px] w-[18px] items-center justify-center rounded-xs border border-[#bbb] bg-white">
                <ChevronDown className="h-3 w-3" strokeWidth={1.5} />
              </button>
            }
          />
        </div>
        <div className="mt-[47px]"><PropertyRows count={5} /></div>
        <div className="mt-[22px] mr-px h-[19px] rounded border border-[#cfcfd4] bg-white" />
        <div className="mt-[26px]"><PropertyRows count={3} /></div>
        <div className="mt-0.5 mr-px h-[19px] rounded border border-[#cfcfd4] bg-white" />
        <div className="mt-[27px]">
          <PropertyRows
            count={1}
            picker={<button type="button" className="mr-px h-[19px] w-[18px] rounded border border-[#bbb] bg-white text-[10px] leading-none font-bold">...</button>}
          />
        </div>
        <div className="mt-[19px] h-[22px] border-y border-[#dfe2ea]" />
      </div>
    </aside>
  );
}

/* ---------- status bar ---------- */

function StatusBar() {
  const cell = 'flex items-center justify-center border-r border-[#c5cddf]';
  const toggles = [
    { label: 'Snap alla griglia', width: 'w-[97px]' },
    { label: 'Orto', width: 'w-[38px]', on: true },
    { label: 'Planare', width: 'w-[53px]' },
    { label: 'Osnap', width: 'w-[48px]', on: true },
    { label: 'SmartTrack', width: 'w-[73px]' },
    { label: 'Gumball', width: 'w-[59px]', on: true },
    { label: 'Registra storia', width: 'w-[88px]' },
    { label: 'Filtro', width: 'w-[41px]' },
  ];
  return (
    <footer className="flex h-[19px] shrink-0 border-t border-[#c5cddf] pt-px whitespace-nowrap">
      <button type="button" className={`${cell} w-[52px] bg-[#cfd9f2] font-bold`}>Assoluto</button>
      <span className={`${cell} w-[88px]`}>x 1187.786</span>
      <span className={`${cell} w-[88px]`}>y -141.271</span>
      <span className={`${cell} w-[88px]`}>z</span>
      <span className={`${cell} w-[89px]`}>Millimetri</span>
      <span className="flex w-[167px] items-center gap-0.5 border-r border-[#c5cddf] pl-0.5">
        <span className="h-3.5 w-3.5 bg-[#081417]" />
        Predefinito
      </span>
      {toggles.map((t) => (
        <button key={t.label} type="button" className={`${cell} ${t.width} ${t.on ? 'bg-[#d0d9f4] font-bold' : ''}`}>
          {t.label}
        </button>
      ))}
      <span className="mr-1.5 flex flex-1 items-center border-r border-[#c5cddf]">Memoria fisica disponibile: 25016 MB</span>
    </footer>
  );
}

export default function App() {
  const [viewTab, setViewTab] = useState('Superiore');

  return (
    <div className="relative flex h-screen w-full flex-col overflow-hidden bg-[#ebeef4] font-['Noto_Sans','Open_Sans',sans-serif] text-[11px] leading-4 text-[#1c1f24]">
      <Gradients />

      <header className="flex h-[21px] shrink-0 items-center bg-[#eef3fb] pl-[3px]">
        <RhinoLogo />
        <h1 className="ml-1.5 flex-1 text-[11px]">Scacchi.3dm (311 KB) - Rhino 7 Licenza Lab Not For Resale - [Superiore]</h1>
        <div className="flex items-center gap-[33px] pr-4">
          <button type="button" aria-label="Riduci"><Minus className="h-3 w-3" strokeWidth={2} /></button>
          <button type="button" aria-label="Ripristina">
            <svg viewBox="0 0 12 12" className="h-3 w-3"><path d="M1.5 3.5h7v7h-7zM4 1.5h5.5l1 1V8" fill="none" stroke="#222" /></svg>
          </button>
          <button type="button" aria-label="Chiudi"><X className="h-3.5 w-3.5" strokeWidth={2} /></button>
        </div>
      </header>

      <nav className="flex h-[22px] shrink-0 items-center gap-[15px] bg-[#fdfdfe] pl-2">
        {menuItems.map((m) => <button key={m} type="button">{m}</button>)}
      </nav>

      {/* command history and prompt */}
      <div className="flex h-[65px] shrink-0 border-t border-[#e0e4ee] pl-1">
        <div className="w-1 border-x border-[#d3daea]" />
        <div className="flex-1 bg-white pl-px leading-[15px] text-black">
          <p>Cliccare all'interno delle regioni da mantenere. Premere Invio al termine ( CombinaAree=Sì&nbsp; TutteLeAree )</p>
          <p>1 riempimento aggiunto alla selezione.</p>
          <p>Comando: _Delete</p>
          <div className="flex items-center border-t border-[#b9bdc5]">
            <label htmlFor="command" className="font-bold">Comando:</label>
            <input id="command" className="ml-1 h-[15px] flex-1 outline-none" />
          </div>
        </div>
        <div className="flex w-4 flex-col items-center justify-end pb-0.5">
          {['M0 4l3-4 3 4z', 'M0 0l3 4 3-4z'].map((d, i) => (
            <button key={d} type="button" aria-label={i ? 'Giù' : 'Su'} className="flex h-2 w-3.5 items-center justify-center border border-[#999] bg-[#f5f5f5]">
              <svg viewBox="0 0 6 4" className="h-1 w-1.5"><path d={d} /></svg>
            </button>
          ))}
        </div>
      </div>

      {/* toolbar tabs */}
      <div className="mt-1 flex h-[21px] shrink-0 items-stretch border-t border-[#d9dfeb] pl-[7px] whitespace-nowrap text-[#33373d]">
        {toolbarTabs.map((t, i) => (
          <button
            key={t}
            type="button"
            className={i === 0 ? 'rounded-t-md border border-b-0 border-[#c3cbdd] px-2.5 pt-[3px]' : 'border-b border-[#c3cbdd] px-[11px] pt-1'}
          >
            {t}
          </button>
        ))}
        <div className="flex flex-1 items-center justify-end border-b border-[#c3cbdd]">
          <Settings className="h-3.5 w-3.5 text-[#777]" strokeWidth={1.5} />
        </div>
      </div>

      <div className="flex h-12 shrink-0 pt-0.5 pl-[7px]">
        {mainTools.map((t) => <ToolButton key={t.name} tool={t} />)}
      </div>

      <div className="flex min-h-0 flex-1">
        <div className="w-[84px] shrink-0 bg-[#eff2f7] pt-[3px] pl-px">
          <div className="mb-px ml-[3px] h-[3px] w-[73px] border-y border-[#cdd5e6]" />
          <div className="grid w-[72px] grid-cols-2">
            {sideTools.map((t) => <ToolButton key={t.name} tool={t} />)}
          </div>
        </div>

        <main className="flex min-w-0 flex-1 flex-col">
          <div className="relative min-h-0 flex-1 overflow-hidden bg-[#9ba2ad]">
            <Drawing />
            <button type="button" className="absolute top-px left-0 flex h-[18px] items-center bg-[#809cf3] pl-[9px] text-[11px] font-bold text-[#1d2a50]">
              Superiore
              <span className="ml-2.5 h-3.5 w-px bg-[#1d2a50]" />
              <svg viewBox="0 0 8 5" className="mx-px h-[5px] w-2"><path d="M0 0h8L4 5z" fill="#1d2a50" /></svg>
            </button>
          </div>
          <div className="flex h-[23px] shrink-0 items-start">
            {['Superiore', 'Prospettica', 'Davanti', 'Destro'].map((v) => (
              <button
                key={v}
                type="button"
                onClick={() => setViewTab(v)}
                className={`h-[21px] ${v === viewTab ? 'rounded-b-md border border-t-0 border-[#c3cbdd] px-2' : 'px-[7px]'}`}
              >
                {v}
              </button>
            ))}
            <button type="button" aria-label="Aggiungi" className="mt-1.5 ml-1.5">
              <svg viewBox="0 0 11 11" className="h-[11px] w-[11px]"><path d="M4 1h3v3h3v3H7v3H4V7H1V4h3z" fill="none" stroke="#777" /></svg>
            </button>
          </div>
        </main>

        <PropertiesPanel />
      </div>

      <div className="flex h-6 shrink-0 items-center gap-2 border-l-4 border-[#e3e8f2] pt-1 pb-px pl-1.5">
        {osnaps.map((o) => (
          <label key={o.label} className="flex items-center gap-[3px]">
            <span className="relative flex h-[13px] w-[13px]">
              <input
                type="checkbox"
                defaultChecked={o.on}
                className={`peer h-[13px] w-[13px] appearance-none rounded-[3px] border bg-[#f6f8fb] checked:border-[#0f5fb8] checked:bg-[#0f5fb8] ${o.dim ? 'border-[#d3d7de]' : 'border-[#6f7278]'}`}
              />
              <svg viewBox="0 0 13 13" className="pointer-events-none absolute inset-0 hidden peer-checked:block">
                <path d="M3.5 6.5l2 2 4-4" fill="none" stroke="#cfe2f7" />
              </svg>
            </span>
            {o.label}
          </label>
        ))}
      </div>

      <StatusBar />
      <OptionsDialog />
    </div>
  );
}
